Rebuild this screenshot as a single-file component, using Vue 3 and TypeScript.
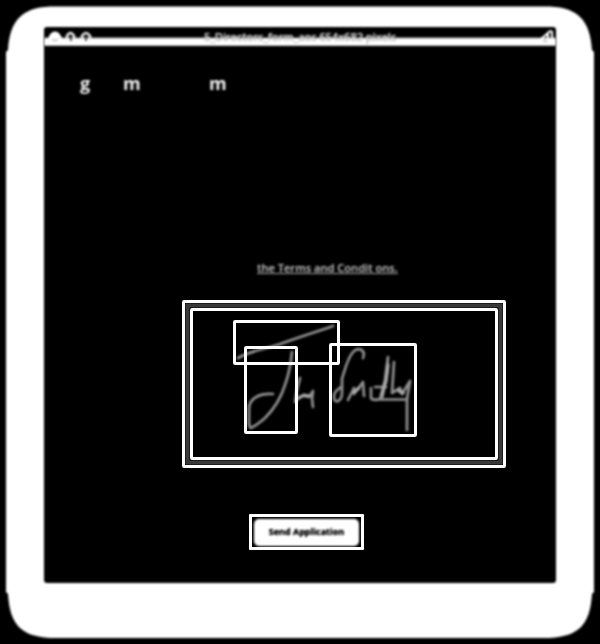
<script setup lang="ts">
interface Box { x: number; y: number; w: number; h: number }
const boxes: Box[] = [
  { x: 1.5, y: 1.5, w: 321, h: 165 },
  { x: 9.5, y: 9.5, w: 305, h: 149 },
  { x: 52.5, y: 21.5, w: 104, h: 42 },
  { x: 63.5, y: 47.5, w: 51, h: 85 },
  { x: 148.5, y: 44.5, w: 85, h: 91 },
]
const initials: string[] = ['g', 'm', 'm']
</script>

<template>
  <main class="stage">
    <section class="tablet">
      <svg class="shell" viewBox="0 0 600 644" aria-hidden="true">
        <path d="M50 6.5H550C579 8 590 21 592 50L594 52V592L592 594C590 625 579 636 550 638H50C21 636 10 625 8 594L6 592V52L8 50C10 21 21 8 50 6.5Z" />
      </svg>
      <div class="window">
        <header class="titlebar">
          <svg class="lights" viewBox="0 0 50 19" aria-hidden="true">
            <path d="M4 12Q6 4.500 11 4.500Q16 4.500 18 12Z" fill="#fff" stroke="none" />
            <path d="M8 12l3 2 3-2" />
            <path d="M23 13V9q3.500-6 7 0v4M38 13V9q4-6 8 0v4" stroke="#eee" stroke-width="2.500" />
            <path d="M27 9v5M42 9v5" stroke="#444" stroke-width="1.800" />
          </svg>
          <span class="title">5_Directors_form_aos 654x682 pixels</span>
          <svg class="expand" viewBox="0 0 16 19" aria-hidden="true">
            <path d="M1 12L8 6Q10 3 12 5V12M8 5v7" />
            <path d="M3 14h4" class="dark" />
          </svg>
        </header>
        <div class="content">
          <div class="initials"><span v-for="(c, i) in initials" :key="i">{{ c }}</span></div>
          <a class="terms">the Terms and Condit ons.</a>
          <svg class="signature" viewBox="0 0 324 168" aria-label="Signature">
            <rect class="band" x="5.5" y="5.5" width="313" height="157" />
            <g class="ink">
              <path d="M56 58C70 50 85 49 101 43C120 36 137 31 151 26" />
              <path d="M110 52C109 62 107 74 103 85C99 98 92 109 83 118Q75 125 69 128Q67 127 67 123V109C67 98 78 93 91 94" />
              <path d="M118 78L115 90L113 102Q118 95 122 96L127 97L131 91L130 99L131 107" />
              <path class="dense" d="M117 98L122 95L127 96" />
              <path d="M181 58C184 50 177 47 172 51C166 56 163 69 160 79V92C160 103 151 104 152 96C152 91 157 89 159 87" />
              <path d="M166 100L172 88V94L181 82L182 96" />
              <path d="M189 88V98Q191 101 198 99L203 80L206 57L205 73L200 98M193 87H204M190 99.500H225" />
              <path d="M212 62L210 93L218 88L220 94L228 81L225 99L225 130" />
              <path class="dense" d="M172 92L177 88M200 95L204 81L206 65M217 91L221 93" />
            </g>
            <rect v-for="(b, i) in boxes" :key="i" class="box" :x="b.x" :y="b.y" :width="b.w" :height="b.h" rx=".7" />
          </svg>
          <div class="submit"><button type="button">Send Application</button></div>
        </div>
      </div>
    </section>
  </main>
</template>

<style>
body { background: #000; overflow: hidden; }
</style>
<style scoped>
.stage { width: 600px; height: 644px; background: #000; font-family: "Open Sans", "Liberation Sans", sans-serif; }
.tablet { position: relative; box-sizing: border-box; height: 644px; padding: 27px 44px 61px; }
.shell { position: absolute; inset: 0; width: 600px; height: 644px; fill: #fff; filter: blur(.8px); }
.window { position: relative; height: 556px; }
.window::before { content: ""; position: absolute; inset: 0; border-radius: 3px; background: #000; filter: blur(.8px); }
.titlebar { position: relative; height: 19px; display: flex; justify-content: space-between; background: linear-gradient(transparent 0 10px, #bbb 11px, #fff 12.5px 18px, #888 19px); filter: blur(.8px); }
.lights { width: 50px; height: 19px; fill: none; stroke: #999; stroke-width: 1; }
.title { width: 200px; font-size: 11.3px; font-weight: 600; letter-spacing: -.2px; line-height: 19px; color: #c8c8c8; text-align: center; white-space: nowrap; text-shadow: 0 0 1px #bbb; }
.expand { width: 16px; height: 19px; margin-left: 34px; fill: none; stroke: #fff; stroke-width: 2; }
.expand .dark { stroke: #999; stroke-width: 1; }
.content { position: relative; display: flex; flex-direction: column; height: 537px; }
.initials { display: grid; grid-template-columns: 43px 86px 30px; margin: 24px 0 0 36px; height: 28px; font-size: 18px; font-weight: 700; line-height: 27px; color: #eee; filter: blur(1px); }
.terms { width: max-content; margin: 161px 0 0 213px; height: 18px; line-height: 18px; font-size: 11.1px; font-weight: 600; color: #aaa; text-decoration: underline; white-space: nowrap; text-shadow: 0 0 1px #888; filter: blur(1px); }
.signature { display: block; flex: none; width: 324px; height: 168px; margin: 23px 0 0 138px; }
.band { fill: none; stroke: #393939; stroke-width: 4; filter: blur(.6px); }
.ink { fill: none; stroke: #909090; stroke-width: 2.7; stroke-linecap: round; stroke-linejoin: round; filter: blur(.95px); }
.dense { stroke: #aaa; stroke-width: 3.2; }
.box { fill: none; stroke: #fff; stroke-width: 3; }
.submit { box-sizing: border-box; width: 115px; height: 36px; margin: 46px 0 0 205px; border: 3px solid #fff; border-radius: 1px; padding: 1.5px 2px; }
.submit button { display: block; width: 105px; height: 27px; border: 0; border-radius: 5px; padding: 0 0 2px; background: #fff; color: #000; font: 700 9px "Open Sans", sans-serif; filter: blur(1.1px); white-space: nowrap; text-shadow: 0 0 1px #000; }
</style>
